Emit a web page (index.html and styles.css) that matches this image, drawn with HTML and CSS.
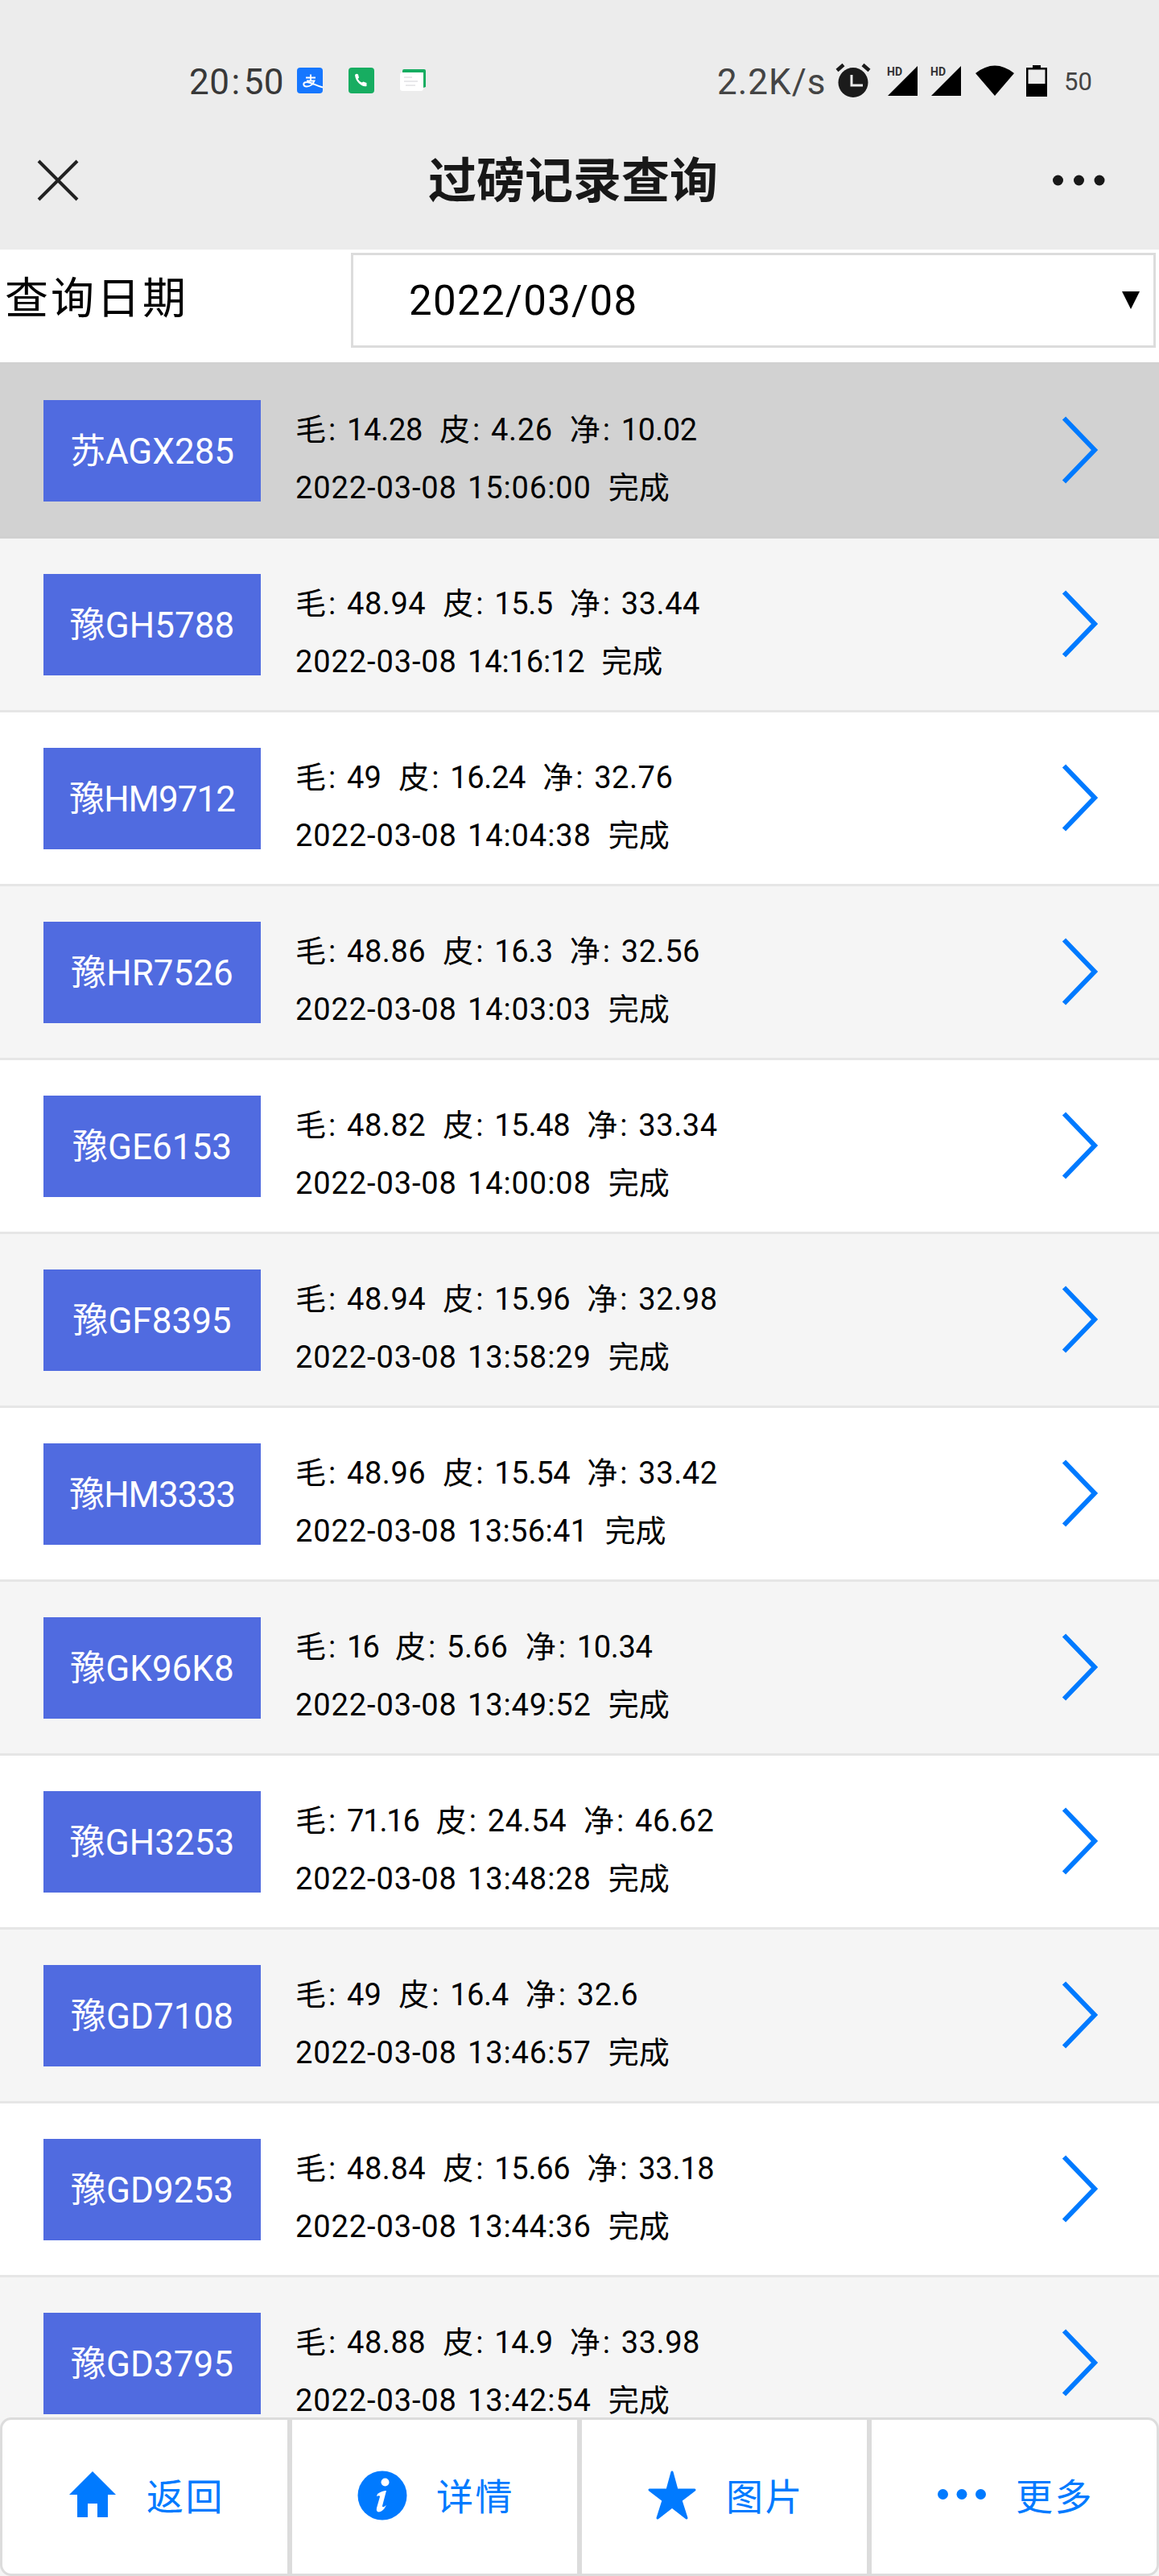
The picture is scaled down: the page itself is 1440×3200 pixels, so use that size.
FILE: index.html
```html
<!DOCTYPE html>
<html lang="zh-CN">
<head>
<meta charset="utf-8">
<title>过磅记录查询</title>
<link rel="stylesheet" href="styles.css">
</head>
<body>
<div class="app">
  <header class="head">
    <div class="status">
      <div class="status-left">
        <span class="clock">20<span class="clock-colon">:</span>50</span>
        <svg class="app-icon" viewBox="0 0 32 32"><rect width="32" height="32" rx="4" fill="#1677ff"/><path d="M11 12.500h12M17 8.500v8M12 16.500h9.500c-2 5-6 7-9.500 7-5 0-5-5.500 0-5.500 6 0 10 4 20 6.500" fill="none" stroke="#fff" stroke-width="1.900"/></svg>
        <svg class="app-icon" viewBox="0 0 32 32"><rect width="32" height="32" rx="4" fill="#17ad61"/><path d="M8 9q2-2 4-.500l1 4-1.500 1.500q2 3.500 5 4.500l2-1 4 1.500v4q-5 1-9.500-3.500T8 9z" fill="#fff"/></svg>
        <svg class="app-icon" viewBox="0 0 32 32"><path d="M3 4q0-2 2-2h25q2 0 2 2v20l-3 1V6H3z" fill="#17ad61"/><rect y="6" width="29" height="23" rx="3" fill="#fff"/><path d="M5 12h10M5 17h17M7 22h12" stroke="#d2d2d6" stroke-width="1"/></svg>
      </div>
      <div class="status-right">
        <span class="speed">2.2K/s</span>
        <svg class="alarm" viewBox="0 0 44 42"><circle cx="22" cy="23.500" r="18.500" fill="#1b1b1b"/><path d="M2 8.500l8-7M34 1.500l8 7" stroke="#1b1b1b" stroke-width="4.500"/><path d="M20 14v13h14" fill="none" stroke="#ececec" stroke-width="3"/></svg>
        <span class="signal"><span class="hd">HD</span><svg viewBox="0 0 37 37"><path d="M37 0v37H0z"/></svg></span>
        <span class="signal signal-2"><span class="hd">HD</span><svg viewBox="0 0 37 37"><path d="M37 0v37H0z"/></svg></span>
        <svg class="wifi" viewBox="0 0 48 38"><path d="M0 10Q24-9 48 10L24 38z"/></svg>
        <svg class="battery" viewBox="0 0 26 39"><path d="M8 0h10v3h8v36H0V3h8zM2.500 5.500V23h21V5.500z" fill-rule="evenodd"/></svg>
        <span class="level">50</span>
      </div>
    </div>
    <div class="nav">
      <svg class="close" viewBox="0 0 50 50"><path d="M1 1l48 48M49 1L1 49" stroke="#222" stroke-width="4"/></svg>
      <h1>过磅记录查询</h1>
      <svg class="dots" viewBox="0 0 66 16"><circle cx="7.500" cy="8" r="6.500"/><circle cx="33.500" cy="8" r="6.500"/><circle cx="59" cy="8" r="6.500"/></svg>
    </div>
  </header>
  <section class="filter">
    <label class="filter-label">查询日期</label>
    <div class="select"><span>2022/03/08</span><svg viewBox="0 0 22 22"><path d="M0 0h22L11 22z"/></svg></div>
  </section>
  <main class="list" id="list"></main>
  <nav class="tabs">
    <a class="tab"><svg viewBox="0 0 60 62"><path d="M30 1l29 29H49v28H36V41H24v17H11V30H1z"/></svg><span>返回</span></a>
    <a class="tab"><svg viewBox="0 0 60 62"><circle cx="30" cy="31" r="30.500"/><circle cx="33.500" cy="14.500" r="5" fill="#fff"/><path d="M24 29q6-4 11-4l-5 19q0 3 5-1-4 8-9 8.500-4 0-3-5l4-14q0-2-4-.500z" fill="#fff"/></svg><span>详情</span></a>
    <a class="tab"><svg viewBox="0 0 60 62"><path d="M30 2l6 22h22L41 37l7 22-18-14-18 14 7-22L2 24h22z" stroke="#007aff" stroke-width="3" stroke-linejoin="round"/></svg><span>图片</span></a>
    <a class="tab"><svg viewBox="0 0 60 62"><circle cx="6.500" cy="29.500" r="6.500"/><circle cx="30" cy="29.500" r="6.500"/><circle cx="53.500" cy="29.500" r="6.500"/></svg><span>更多</span></a>
  </nav>
</div>
<script src="app.js"></script>
</body>
</html>
```
FILE: styles.css
```css
* { box-sizing: border-box; }
body {
  margin: 0;
  background: #fff;
  color: #000;
  font-family: Roboto, "Noto Sans CJK SC", sans-serif;
}
svg { display: block; flex: none; overflow: visible; }
.app { width: 1440px; height: 3200px; display: flex; flex-direction: column; overflow: hidden; }

.head { height: 310px; flex: none; background: #ececec; }
.status { height: 160px; padding: 40px 83px 0 235px; display: flex; justify-content: space-between; }
.status-left, .status-right { display: flex; height: 120px; align-items: center; }
.clock { width: 134px; padding-top: 4px; font-size: 44px; line-height: 48px; color: #383838; letter-spacing: .5px; }
.clock-colon { padding: 0 4px 0 2px; }
.app-icon { width: 32px; height: 32px; margin-right: 32px; }
.speed { width: 147px; padding-top: 4px; font-size: 44px; color: #444; letter-spacing: 1px; white-space: nowrap; }
.alarm { width: 44px; height: 42px; margin-right: 21px; }
.signal { position: relative; width: 37px; height: 37px; margin-right: 17px; }
.signal svg { width: 37px; height: 37px; }
.signal-2 { margin-right: 18px; }
.hd { position: absolute; left: -1px; top: 0; font-size: 14px; font-weight: 700; line-height: 14px; color: #333; }
.wifi { width: 48px; height: 38px; margin-right: 15px; }
.battery { width: 26px; height: 39px; margin-right: 21px; }
.level { width: 35px; padding-top: 3px; font-size: 31px; color: #444; }

.nav { height: 127px; padding: 0 67px 0 47px; display: flex; align-items: center; justify-content: space-between; }
.nav .close { width: 50px; height: 50px; }
.nav h1 { margin: 0 0 0 20px; padding-top: 5px; font-size: 60px; line-height: 72px; font-weight: 700; color: #181818; }
.nav .dots { width: 66px; height: 16px; fill: #181818; }

.filter { height: 140px; flex: none; padding: 4px 4px 18px 6px; display: flex; }
.filter-label { width: 430px; padding-top: 22px; font-size: 54px; line-height: 72px; letter-spacing: 3px; }
.select {
  flex: 1; padding: 0 17px 0 69px; border: 3px solid #dcdcdc;
  display: flex; align-items: center; justify-content: space-between;
  font-size: 51px; letter-spacing: 1.3px;
}
.select svg { width: 22px; height: 22px; }

.list { flex: 1; min-height: 0; overflow: hidden; border-top: 3px solid #d1d1d1; }
.row { height: 216px; padding: 44px 76px 0 54px; border-bottom: 3px solid #e6e6e6; display: flex; align-items: flex-start; background: #fff; }
.row:nth-child(even) { background: #f5f5f5; }
.row.active { background: #d2d2d2; border-color: #d0d0d0; }
.plate { width: 270px; height: 126px; flex: none; background: #506be0; color: #fff; font-size: 44px; line-height: 128px; text-align: center; white-space: nowrap; }
.plate.wide { letter-spacing: -1px; }
.info { flex: 1; padding: 1px 0 0 43px; font-size: 38px; line-height: 72px; }
.line { height: 72px; display: flex; white-space: nowrap; }
.label { width: 64px; letter-spacing: 3px; }
.num { margin-right: 21px; }
.date { width: 214px; letter-spacing: .9px; }
.chevron { width: 44px; height: 84px; margin-top: 20px; fill: none; stroke: #007aff; stroke-width: 6px; }

.tabs { height: 197px; flex: none; display: flex; background: #f5f5f5; }
.tab { width: 360px; padding-left: 82px; border: 3px solid #dcdcdc; background: #fff; display: flex; align-items: center; gap: 37px; color: #007aff; font-size: 46px; letter-spacing: 2.5px; }
.tab:first-child { border-radius: 14px 0 0 14px; }
.tab:last-child { border-radius: 0 14px 14px 0; }
.tab svg { width: 60px; height: 62px; fill: currentColor; margin-bottom: 3px; }
.tab span { padding-bottom: 7px; }
```
FILE: app.js
```js
const records = [
  ["苏AGX285", "14.28", "4.26", "10.02", "15:06:00"],
  ["豫GH5788", "48.94", "15.5", "33.44", "14:16:12"],
  ["豫HM9712", "49", "16.24", "32.76", "14:04:38"],
  ["豫HR7526", "48.86", "16.3", "32.56", "14:03:03"],
  ["豫GE6153", "48.82", "15.48", "33.34", "14:00:08"],
  ["豫GF8395", "48.94", "15.96", "32.98", "13:58:29"],
  ["豫HM3333", "48.96", "15.54", "33.42", "13:56:41"],
  ["豫GK96K8", "16", "5.66", "10.34", "13:49:52"],
  ["豫GH3253", "71.16", "24.54", "46.62", "13:48:28"],
  ["豫GD7108", "49", "16.4", "32.6", "13:46:57"],
  ["豫GD9253", "48.84", "15.66", "33.18", "13:44:36"],
  ["豫GD3795", "48.88", "14.9", "33.98", "13:42:54"]
];

function tracking(text) {
  let extra = 0;
  for (const c of text) {
    extra += c === "1" ? -4 : c === "." ? 2 : c === ":" ? 5.1 : 0.2;
  }
  return (extra / text.length).toFixed(2);
}

const num = t => `<span class="num" style="letter-spacing:${tracking(t)}px">${t}</span>`;
const label = t => `<span class="label">${t}:</span>`;

document.getElementById("list").innerHTML = records.map(([plate, gross, tare, net, time], i) => `
  <article class="row${i === 0 ? " active" : ""}">
    <div class="plate${plate.includes("M") ? " wide" : ""}">${plate}</div>
    <div class="info">
      <div class="line">${label("毛")}${num(gross)}${label("皮")}${num(tare)}${label("净")}${num(net)}</div>
      <div class="line"><span class="date">2022-03-08</span>${num(time)}<span>完成</span></div>
    </div>
    <svg class="chevron" viewBox="0 0 44 84"><path d="M2 2.500L40 42 2 81.500"/></svg>
  </article>`).join("");
```
